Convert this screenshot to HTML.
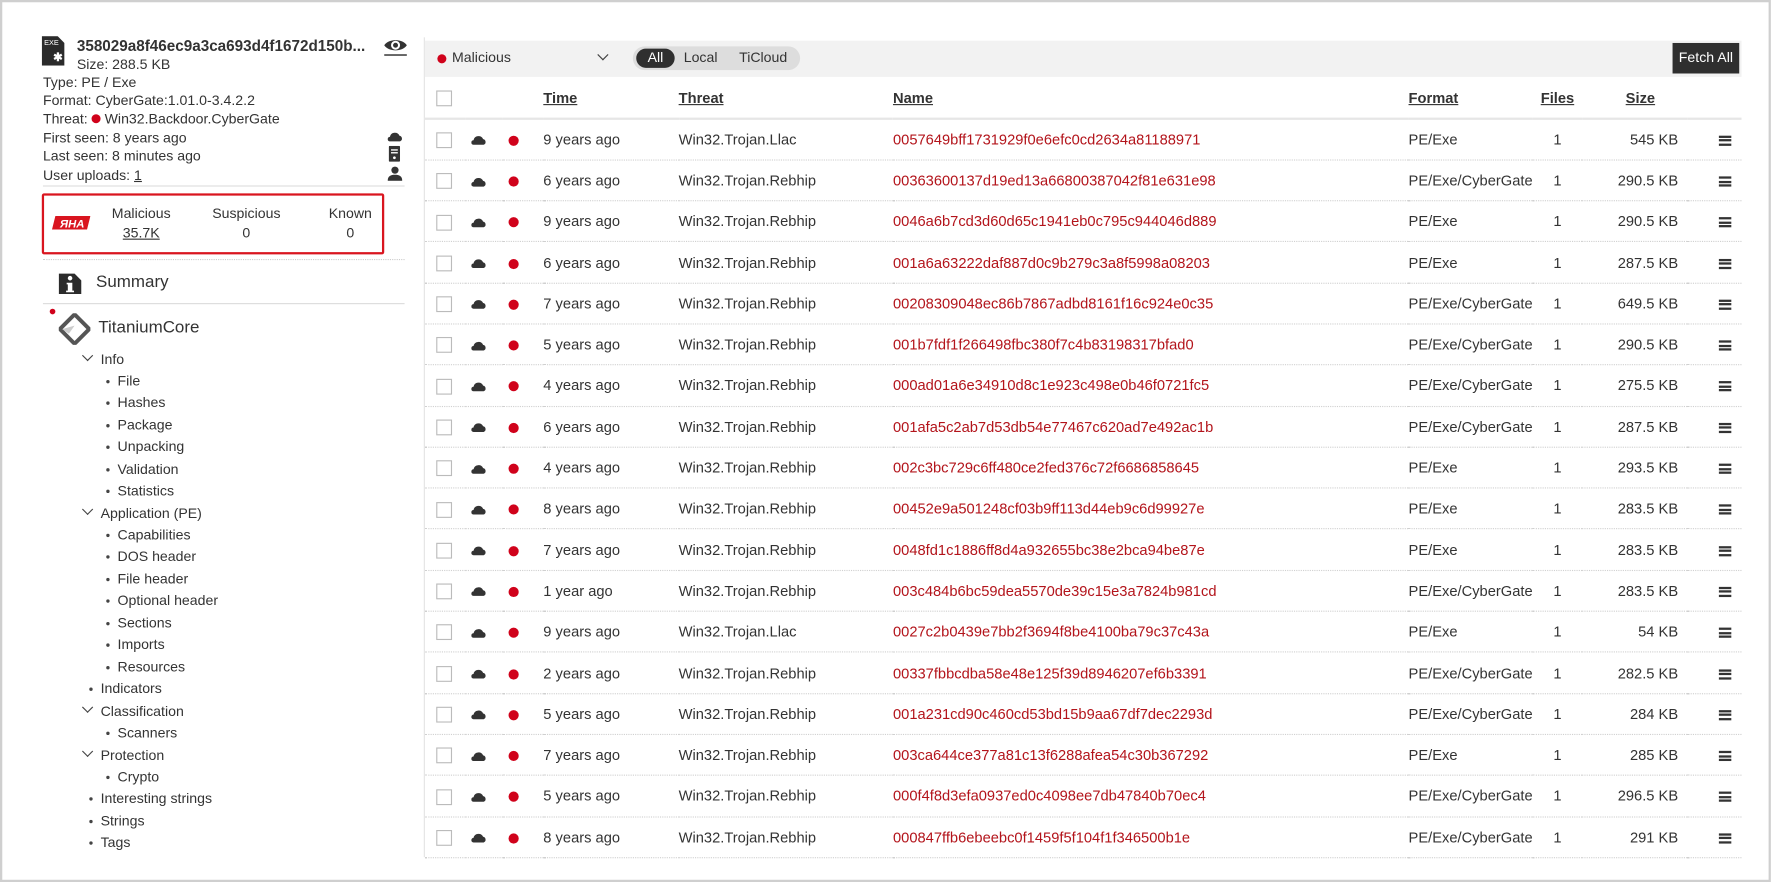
<!DOCTYPE html>
<html><head><meta charset="utf-8"><style>
*{margin:0;padding:0;box-sizing:border-box}
html,body{width:1772px;height:882px;overflow:hidden;background:#fff}
#w{position:absolute;left:0;top:0;width:1568px;height:780px;transform:scale(1.1301,1.1308);transform-origin:0 0;font-family:"Liberation Sans",sans-serif;color:#333;font-size:12.5px}
.a{position:absolute;white-space:nowrap}
#frame{position:absolute;left:0;top:0;width:1567px;height:780px;border:2px solid #cfcfcf}
.ln{line-height:16px}
.tree .a{font-size:12.5px}
.bul{position:absolute;width:3px;height:3px;border-radius:50%;background:#444}
.chev{position:absolute;width:7px;height:7px;border-right:1.2px solid #444;border-bottom:1.2px solid #444;transform:rotate(45deg)}
table{position:absolute;left:376px;top:68px;width:1165px;border-collapse:collapse;font-size:13px}
td,th{height:36.3px;padding:0;vertical-align:middle;white-space:nowrap}
th{height:37px;text-align:left;font-weight:bold;border-bottom:2px solid #e6e6e6}
tbody tr td{border-bottom:1px dotted #d0d0d0}
.cb{display:inline-block;width:14px;height:14px;border:1px solid #bbb;background:#fff;vertical-align:middle}
.rd{display:inline-block;width:9px;height:9px;border-radius:50%;background:#d0021b;vertical-align:middle}
.nm{color:#b3141b}
.menu{display:inline-block;width:11px;height:9px;border-top:2px solid #333;border-bottom:2px solid #333;position:relative;vertical-align:middle}
.menu:after{content:"";position:absolute;left:0;right:0;top:1.5px;height:2px;background:#333}
</style></head><body><div id="w">
<div id="frame"></div>

<svg class="a" style="left:37px;top:32px" width="20" height="26" viewBox="0 0 20 26"><path d="M0 0H14L20 6V26H0Z" fill="#2b2b2b"/><text x="2" y="8" font-size="6.5" fill="#fff" font-family="Liberation Sans">EXE</text><text x="10" y="22" font-size="10" fill="#fff" font-weight="bold" font-family="Liberation Sans">✱</text></svg>
<div class="a" style="left:68px;top:33px;font-weight:bold;font-size:13.5px">358029a8f46ec9a3ca693d4f1672d150b...</div>
<svg class="a" style="left:339px;top:32px" width="22" height="18" viewBox="0 0 22 18"><path d="M1 8C5 2 17 2 21 8C17 14 5 14 1 8Z" fill="#333"/><circle cx="11" cy="8" r="4" fill="#fff"/><circle cx="11" cy="8" r="2.2" fill="#333"/><rect x="1" y="16" width="20" height="1.3" fill="#333"/></svg>
<div class="a ln" style="left:68px;top:49px">Size: 288.5 KB</div>
<div class="a ln" style="left:38px;top:65px">Type: PE / Exe</div>
<div class="a ln" style="left:38px;top:81px">Format: CyberGate:1.01.0-3.4.2.2</div>
<div class="a ln" style="left:38px;top:97px">Threat: <span class="rd" style="width:8px;height:8px;margin-top:-2px"></span> Win32.Backdoor.CyberGate</div>
<div class="a ln" style="left:38px;top:114px">First seen: 8 years ago</div>
<div class="a ln" style="left:38px;top:130px">Last seen: 8 minutes ago</div>
<div class="a ln" style="left:38px;top:147px">User uploads: <u>1</u></div>
<svg class="a" style="left:343px;top:116px" width="13" height="10" viewBox="0 0 13 10"><path d="M2 9A2 2 0 0 1 2 5A4.5 4.5 0 0 1 10.5 4A2.6 2.6 0 0 1 11 9Z" fill="#333"/></svg>
<svg class="a" style="left:344px;top:129px" width="10" height="14" viewBox="0 0 10 14"><rect x="0" y="0" width="10" height="14" rx="1" fill="#333"/><rect x="2" y="3" width="6" height="1.2" fill="#fff"/><rect x="2" y="5.5" width="6" height="1.2" fill="#fff"/><circle cx="5" cy="10.5" r="1.2" fill="#fff"/></svg>
<svg class="a" style="left:343px;top:147px" width="13" height="13" viewBox="0 0 13 13"><circle cx="6.5" cy="3.5" r="3.2" fill="#333"/><path d="M0 13C0 8.5 3 7.5 6.5 7.5S13 8.5 13 13Z" fill="#333"/></svg>
<div class="a" style="left:38px;top:164px;width:320px;height:1px;background:#ddd"></div>
<div class="a" style="left:37px;top:171px;width:303px;height:54px;border:2px solid #d9151f;border-radius:2px"></div>
<svg class="a" style="left:46px;top:191px" width="34" height="12" viewBox="0 0 34 12"><path d="M3 0H34L31 12H0Z" fill="#d9151f"/><text x="7" y="10" font-size="10" font-weight="bold" font-style="italic" fill="#fff" font-family="Liberation Sans">ЯHA</text></svg>
<div class="a" style="left:85px;top:181px;width:80px;text-align:center;line-height:17px">Malicious<br><u>35.7K</u></div>
<div class="a" style="left:178px;top:181px;width:80px;text-align:center;line-height:17px">Suspicious<br>0</div>
<div class="a" style="left:280px;top:181px;width:60px;text-align:center;line-height:17px">Known<br>0</div>
<div class="a" style="left:38px;top:229px;width:320px;border-top:1px dotted #ccc"></div>
<svg class="a" style="left:52px;top:239px" width="20" height="21" viewBox="0 0 20 21"><path d="M0 3H14L20 9V21H0Z" fill="#2b2b2b"/><circle cx="10" cy="7" r="2" fill="#fff"/><path d="M7 11H12V18H13.5V19.5H6.5V18H8V12.5H7Z" fill="#fff"/></svg>
<div class="a" style="left:85px;top:241px;font-size:15px">Summary</div>
<div class="a" style="left:38px;top:268px;width:320px;height:1px;background:#ddd"></div>
<div class="a" style="left:44px;top:273px;width:5px;height:5px;border-radius:50%;background:#d0021b"></div>
<svg class="a" style="left:52px;top:277px" width="28" height="28" viewBox="0 0 28 28"><path d="M14 1L27 14L14 27L1 14Z" fill="none" stroke="#555" stroke-width="3.5"/><path d="M3 14L14 11L9 18Z" fill="#ccc"/></svg>
<div class="a" style="left:87px;top:281px;font-size:15px">TitaniumCore</div>
<div class="tree">
<div class="chev" style="left:74px;top:311px"></div><div class="a" style="left:89px;top:311px">Info</div>
<div class="bul" style="left:94px;top:336px"></div><div class="a" style="left:104px;top:330px">File</div>
<div class="bul" style="left:94px;top:355px"></div><div class="a" style="left:104px;top:349px">Hashes</div>
<div class="bul" style="left:94px;top:375px"></div><div class="a" style="left:104px;top:369px">Package</div>
<div class="bul" style="left:94px;top:394px"></div><div class="a" style="left:104px;top:388px">Unpacking</div>
<div class="bul" style="left:94px;top:414px"></div><div class="a" style="left:104px;top:408px">Validation</div>
<div class="bul" style="left:94px;top:433px"></div><div class="a" style="left:104px;top:427px">Statistics</div>
<div class="chev" style="left:74px;top:447px"></div><div class="a" style="left:89px;top:447px">Application (PE)</div>
<div class="bul" style="left:94px;top:472px"></div><div class="a" style="left:104px;top:466px">Capabilities</div>
<div class="bul" style="left:94px;top:491px"></div><div class="a" style="left:104px;top:485px">DOS header</div>
<div class="bul" style="left:94px;top:511px"></div><div class="a" style="left:104px;top:505px">File header</div>
<div class="bul" style="left:94px;top:530px"></div><div class="a" style="left:104px;top:524px">Optional header</div>
<div class="bul" style="left:94px;top:550px"></div><div class="a" style="left:104px;top:544px">Sections</div>
<div class="bul" style="left:94px;top:569px"></div><div class="a" style="left:104px;top:563px">Imports</div>
<div class="bul" style="left:94px;top:589px"></div><div class="a" style="left:104px;top:583px">Resources</div>
<div class="bul" style="left:79px;top:608px"></div><div class="a" style="left:89px;top:602px">Indicators</div>
<div class="chev" style="left:74px;top:622px"></div><div class="a" style="left:89px;top:622px">Classification</div>
<div class="bul" style="left:94px;top:647px"></div><div class="a" style="left:104px;top:641px">Scanners</div>
<div class="chev" style="left:74px;top:661px"></div><div class="a" style="left:89px;top:661px">Protection</div>
<div class="bul" style="left:94px;top:686px"></div><div class="a" style="left:104px;top:680px">Crypto</div>
<div class="bul" style="left:79px;top:705px"></div><div class="a" style="left:89px;top:699px">Interesting strings</div>
<div class="bul" style="left:79px;top:725px"></div><div class="a" style="left:89px;top:719px">Strings</div>
<div class="bul" style="left:79px;top:744px"></div><div class="a" style="left:89px;top:738px">Tags</div>
</div>

<div class="a" style="left:375px;top:33px;width:1px;height:725px;background:#e4e4e4"></div>
<div class="a" style="left:376px;top:36px;width:1165px;height:32px;background:#f2f2f2"></div>
<span class="a rd" style="left:387px;top:48px;width:8px;height:8px"></span>
<div class="a" style="left:400px;top:44px">Malicious</div>
<div class="chev" style="left:530px;top:45px;width:7px;height:7px"></div>
<div class="a" style="left:560px;top:41px;width:148px;height:21px;border-radius:11px;background:#ddd"></div>
<div class="a" style="left:563px;top:43px;width:34px;height:17px;border-radius:9px;background:#2f2f2f;color:#fff;text-align:center;line-height:17px">All</div>
<div class="a" style="left:605px;top:44px">Local</div>
<div class="a" style="left:654px;top:44px">TiCloud</div>
<div class="a" style="left:1480px;top:38px;width:59px;height:27px;background:#2f2f2f;color:#fff;text-align:center;line-height:27px">Fetch All</div>

<table>
<colgroup><col style="width:36px"><col style="width:33px"><col style="width:36px"><col style="width:120px"><col style="width:190px"><col style="width:457px"><col style="width:108px"><col style="width:44px"><col style="width:93px"><col style="width:48px"></colgroup>
<thead><tr><th style="padding-left:10px"><span class="cb"></span></th><th></th><th></th><th><u>Time</u></th><th><u>Threat</u></th><th><u>Name</u></th><th><u>Format</u></th><th style="text-align:center"><u>Files</u></th><th style="text-align:center;padding-left:10px"><u>Size</u></th><th></th></tr></thead>
<tbody id="tb"></tbody>
</table>
<script>
var d=[["9 years ago","Win32.Trojan.Llac","0057649bff1731929f0e6efc0cd2634a81188971","PE/Exe","545 KB"],
["6 years ago","Win32.Trojan.Rebhip","00363600137d19ed13a66800387042f81e631e98","PE/Exe/CyberGate","290.5 KB"],
["9 years ago","Win32.Trojan.Rebhip","0046a6b7cd3d60d65c1941eb0c795c944046d889","PE/Exe","290.5 KB"],
["6 years ago","Win32.Trojan.Rebhip","001a6a63222daf887d0c9b279c3a8f5998a08203","PE/Exe","287.5 KB"],
["7 years ago","Win32.Trojan.Rebhip","00208309048ec86b7867adbd8161f16c924e0c35","PE/Exe/CyberGate","649.5 KB"],
["5 years ago","Win32.Trojan.Rebhip","001b7fdf1f266498fbc380f7c4b83198317bfad0","PE/Exe/CyberGate","290.5 KB"],
["4 years ago","Win32.Trojan.Rebhip","000ad01a6e34910d8c1e923c498e0b46f0721fc5","PE/Exe/CyberGate","275.5 KB"],
["6 years ago","Win32.Trojan.Rebhip","001afa5c2ab7d53db54e77467c620ad7e492ac1b","PE/Exe/CyberGate","287.5 KB"],
["4 years ago","Win32.Trojan.Rebhip","002c3bc729c6ff480ce2fed376c72f6686858645","PE/Exe","293.5 KB"],
["8 years ago","Win32.Trojan.Rebhip","00452e9a501248cf03b9ff113d44eb9c6d99927e","PE/Exe","283.5 KB"],
["7 years ago","Win32.Trojan.Rebhip","0048fd1c1886ff8d4a932655bc38e2bca94be87e","PE/Exe","283.5 KB"],
["1 year ago","Win32.Trojan.Rebhip","003c484b6bc59dea5570de39c15e3a7824b981cd","PE/Exe/CyberGate","283.5 KB"],
["9 years ago","Win32.Trojan.Llac","0027c2b0439e7bb2f3694f8be4100ba79c37c43a","PE/Exe","54 KB"],
["2 years ago","Win32.Trojan.Rebhip","00337fbbcdba58e48e125f39d8946207ef6b3391","PE/Exe/CyberGate","282.5 KB"],
["5 years ago","Win32.Trojan.Rebhip","001a231cd90c460cd53bd15b9aa67df7dec2293d","PE/Exe/CyberGate","284 KB"],
["7 years ago","Win32.Trojan.Rebhip","003ca644ce377a81c13f6288afea54c30b367292","PE/Exe","285 KB"],
["5 years ago","Win32.Trojan.Rebhip","000f4f8d3efa0937ed0c4098ee7db47840b70ec4","PE/Exe/CyberGate","296.5 KB"],
["8 years ago","Win32.Trojan.Rebhip","000847ffb6ebeebc0f1459f5f104f1f346500b1e","PE/Exe/CyberGate","291 KB"]];
var cl='<svg width="13" height="10" viewBox="0 0 13 10" style="vertical-align:middle"><path d="M2 9A2 2 0 0 1 2 5A4.5 4.5 0 0 1 10.5 4A2.6 2.6 0 0 1 11 9Z" fill="#333"/></svg>';
var h='';d.forEach(function(r){h+='<tr><td style="padding-left:10px"><span class="cb"></span></td><td style="padding-left:5px">'+cl+'</td><td style="padding-left:5px"><span class="rd"></span></td><td>'+r[0]+'</td><td>'+r[1]+'</td><td class="nm">'+r[2]+'</td><td>'+r[3]+'</td><td style="text-align:center">1</td><td style="text-align:right;padding-right:8px">'+r[4]+'</td><td style="padding-left:28px"><span class="menu"></span></td></tr>'});
document.getElementById('tb').innerHTML=h;
</script>
</div></body></html>
